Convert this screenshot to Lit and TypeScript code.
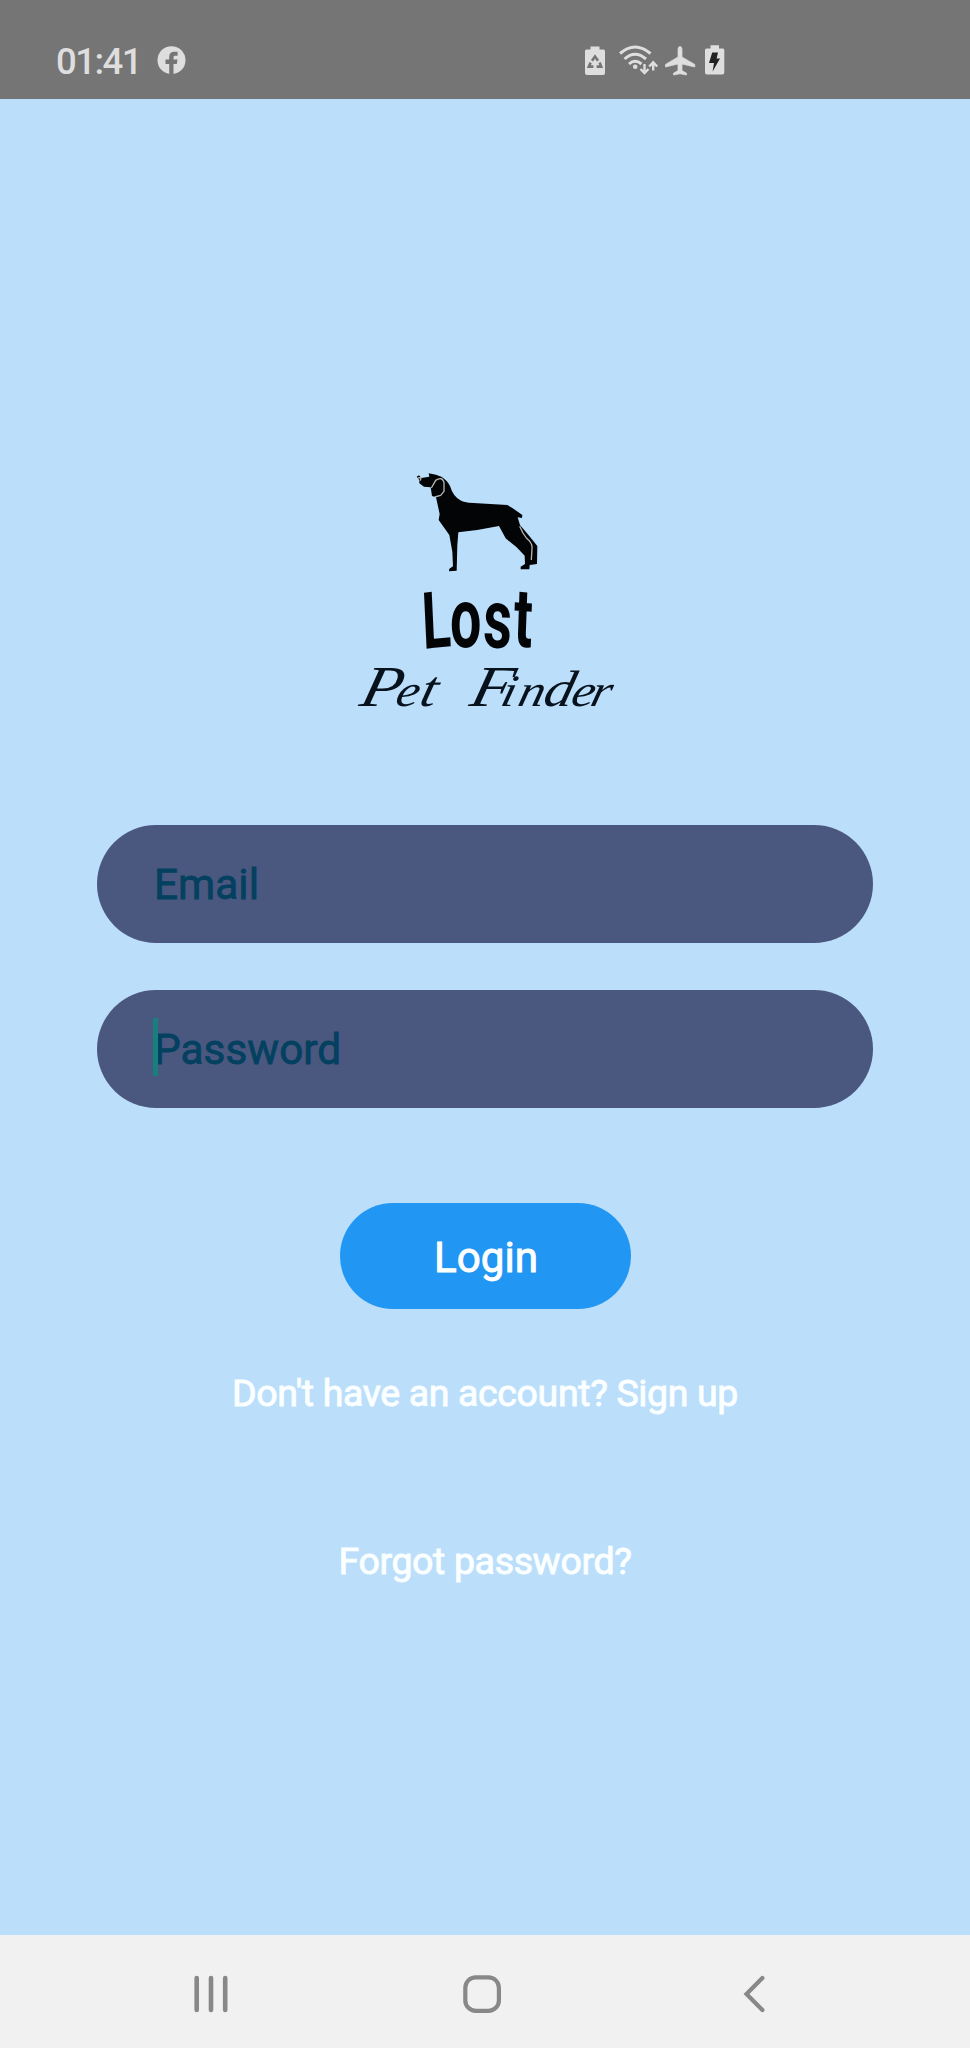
import { LitElement, html, css, svg } from "lit";
import { customElement } from "lit/decorators.js";

const ICON = "#dedede";

@customElement("status-bar")
class StatusBar extends LitElement {
  static styles = css`
    :host { display: flex; height: 99px; box-sizing: border-box; padding: 40px 0 0 56px; background: #757575; }
    .time { font: 500 36.5px/43px Roboto, sans-serif; color: #dedede; width: 101px; letter-spacing: -1.5px; }
    svg { display: block; }
    .right { margin-left: 398px; }
  `;
  render() {
    return html`
      <div class="time">01:41</div>
      <svg width="30" height="42" viewBox="157 40 30 42">
        <circle cx="171.5" cy="60.2" r="14" fill=${ICON} />
        <path d="M169.2 75V64H165.5V59.6H169.2V57.2C169.2 53.4 171.3 51.8 174.2 51.8H177.6V55.8H175.4C174 55.8 173.5 56.4 173.5 57.6V59.6H177.5L176.8 64H173.5V75Z" fill="#757575" />
      </svg>
      <svg class="right" width="145" height="42" viewBox="585 40 145 42" fill="none">
        <path d="M586.5 49.5H590.5V46.5H599.5V49.5H603.5Q605 49.5 605 51V73Q605 75 603 75H587Q585 75 585 73V51Q585 49.5 586.5 49.5Z" fill=${ICON} />
        <g stroke="#757575" stroke-width="2.6">
          <path d="M592 60.8L595 56.6L598 60.8M599.6 62.6L601.2 66.6H596.6M593.4 66.6H588.8L590.6 62.6" />
        </g>
        <g stroke=${ICON} stroke-width="3">
          <path d="M620 53.5Q635 40.5 650.5 53.5" />
          <path d="M624.5 59Q635 49.5 646 59" />
          <path d="M629 64Q635 58.5 641.5 64" />
          <path d="M644.5 64V71M640.5 69L644.5 73L648.5 69M653.2 70.5V63M649.2 66.5L653.2 62.3L657.2 66.5" stroke-width="2.4" />
        </g>
        <circle cx="635.2" cy="66.8" r="2.3" fill=${ICON} />
        <path d="M680 46.5C678.6 46.5 678 48 678 49.5V57L665.5 64.4V67L678 64V70.5L673.5 73.2V75L680 73.8L686.5 75V73.2L682 70.5V64L694.8 67V64.4L682 57V49.5C682 48 681.4 46.5 680 46.5Z" fill=${ICON} stroke=${ICON} stroke-width=".7" />
        <path d="M706.5 48.5H710.5V45.2H719V48.5H723Q724.3 48.5 724.3 50V72.5Q724.3 74.5 722.5 74.5H707Q705 74.5 705 72.5V50Q705 48.5 706.5 48.5Z" fill=${ICON} />
        <path d="M712.2 52.5H718L716.6 58.6H720L712.6 71.5L714 63H709Z" fill="#222" />
      </svg>`;
  }
}

@customElement("pet-logo")
class PetLogo extends LitElement {
  static styles = css`
    :host { display: block; }
    svg { display: block; overflow: visible; }
    .lost { font: 700 83px Roboto, sans-serif; }
    .script { font: italic 400 45px "Liberation Serif", serif; }
    .cap { font-size: 58px; }
    .tall { font-size: 51px; }
  `;
  render() {
    return html`
      <svg width="270" height="250" viewBox="350 465 270 250">
        <g transform="translate(400 460) scale(.33333)">
          <path d="M50 50L57 46L64 54L88 50L86 40L108 44L124 50Q142 61 150 78Q159 108 180 120Q190 128 220 129L322 135L337 144L367 165L366 174L353 172L360 195L386 226L412 258L411 312L389 315L388 328H362V320L375 312L374 287L350 262L317 235L297 198Q235 211 175 217L172 255L170 332L147 334L148 326L159 319L157 275L148 225L116 180L119 162L108 112L96 108L92 82L72 80L58 70V60Z" fill="#020406" />
          <path d="M53 54L63 53L61 62M94 84L107 61Q127 48 132 68V94L122 106L104 111M359 199Q368 221 380 235Q398 250 396 265L394 300" fill="none" stroke="#b4b5b1" stroke-width="4" stroke-linejoin="round" />
        </g>
        <g transform="translate(422.5 647) scale(.67 1)" fill="#020406">
          <text class="lost" x="1 41 90 135" y="2 0 0 -1" rotate="-4 0 2 3"><tspan font-size="79">L</tspan>ost</text>
        </g>
        <g fill="#07121d">
          <g transform="translate(358 706) skewX(-14) scale(1.15 1)"><text class="script" x="0 31 52" y="0"><tspan class="cap">P</tspan>e<tspan class="tall">t</tspan></text></g>
          <g transform="translate(468 706) skewX(-14) scale(1.15 1)"><text class="script" x="0 27 42 64 88 105" y="0"><tspan class="cap">F</tspan>in<tspan class="tall">d</tspan>er</text></g>
        </g>
      </svg>`;
  }
}

@customElement("nav-bar")
class NavBar extends LitElement {
  static styles = css`
    :host { display: flex; height: 113px; background: #f1f1f1; align-items: center; padding: 4px 0 0 191px; box-sizing: border-box; }
    svg { display: block; }
    .home { margin: 0 241px 0 231px; }
  `;
  render() {
    const line = (x: number) => svg`<path d="M${x} 4V36" />`;
    return html`
      <svg width="40" height="40" fill="none" stroke="#888" stroke-width="4.6" stroke-linecap="round">${[5.7, 20, 34.2].map(line)}</svg>
      <svg class="home" width="40" height="40" fill="none" stroke="#888" stroke-width="4.2"><rect x="3.3" y="3.3" width="33.6" height="33.6" rx="10.5" /></svg>
      <svg width="24" height="40" fill="none" stroke="#888" stroke-width="4.2" stroke-linecap="round"><path d="M19.4 4L3.5 20L19.4 36" /></svg>`;
  }
}

@customElement("app-root")
class AppRoot extends LitElement {
  static styles = css`
    :host { display: flex; flex-direction: column; height: 2048px; background: #bbdefb; font-family: Roboto, sans-serif; }
    main { flex: 1; display: flex; flex-direction: column; align-items: center; padding-top: 366px; }
    form { display: contents; }
    .field { position: relative; width: 776px; height: 118px; margin-top: 47px; }
    .field.first { margin-top: 110px; }
    input { display: block; width: 100%; height: 100%; box-sizing: border-box; border: 0; border-radius: 59px; padding: 0 58px 0 57px; background: #4a5880; font: 400 42.4px Roboto, sans-serif; }
    input::placeholder { color: #04405f; opacity: 1; -webkit-text-stroke: 0.8px #04405f; }
    .caret { position: absolute; left: 56px; top: 28px; width: 5px; height: 58px; background: #17807e; }
    button { width: 291px; height: 106px; margin: 95px 0 0; border: 0; border-radius: 53px; background: #2196f3; color: #fff; font: 400 42.2px Roboto, sans-serif; -webkit-text-stroke: 0.9px #fff; padding: 3px 0 0 2px; }
    .link { color: #fbffff; font-size: 37.5px; letter-spacing: -0.37px; line-height: 44px; -webkit-text-stroke: 0.9px #fbffff; white-space: nowrap; }
    .signup { margin-top: 62px; }
    .forgot { margin-top: 124px; }
  `;
  render() {
    return html`
      <status-bar></status-bar>
      <main>
        <pet-logo></pet-logo>
        <form>
          <div class="field first"><input type="email" placeholder="Email" /></div>
          <div class="field"><input type="password" placeholder="Password" /><span class="caret"></span></div>
          <button type="button">Login</button>
        </form>
        <div class="link signup">Don't have an account? Sign up</div>
        <div class="link forgot">Forgot password?</div>
      </main>
      <nav-bar></nav-bar>`;
  }
}
